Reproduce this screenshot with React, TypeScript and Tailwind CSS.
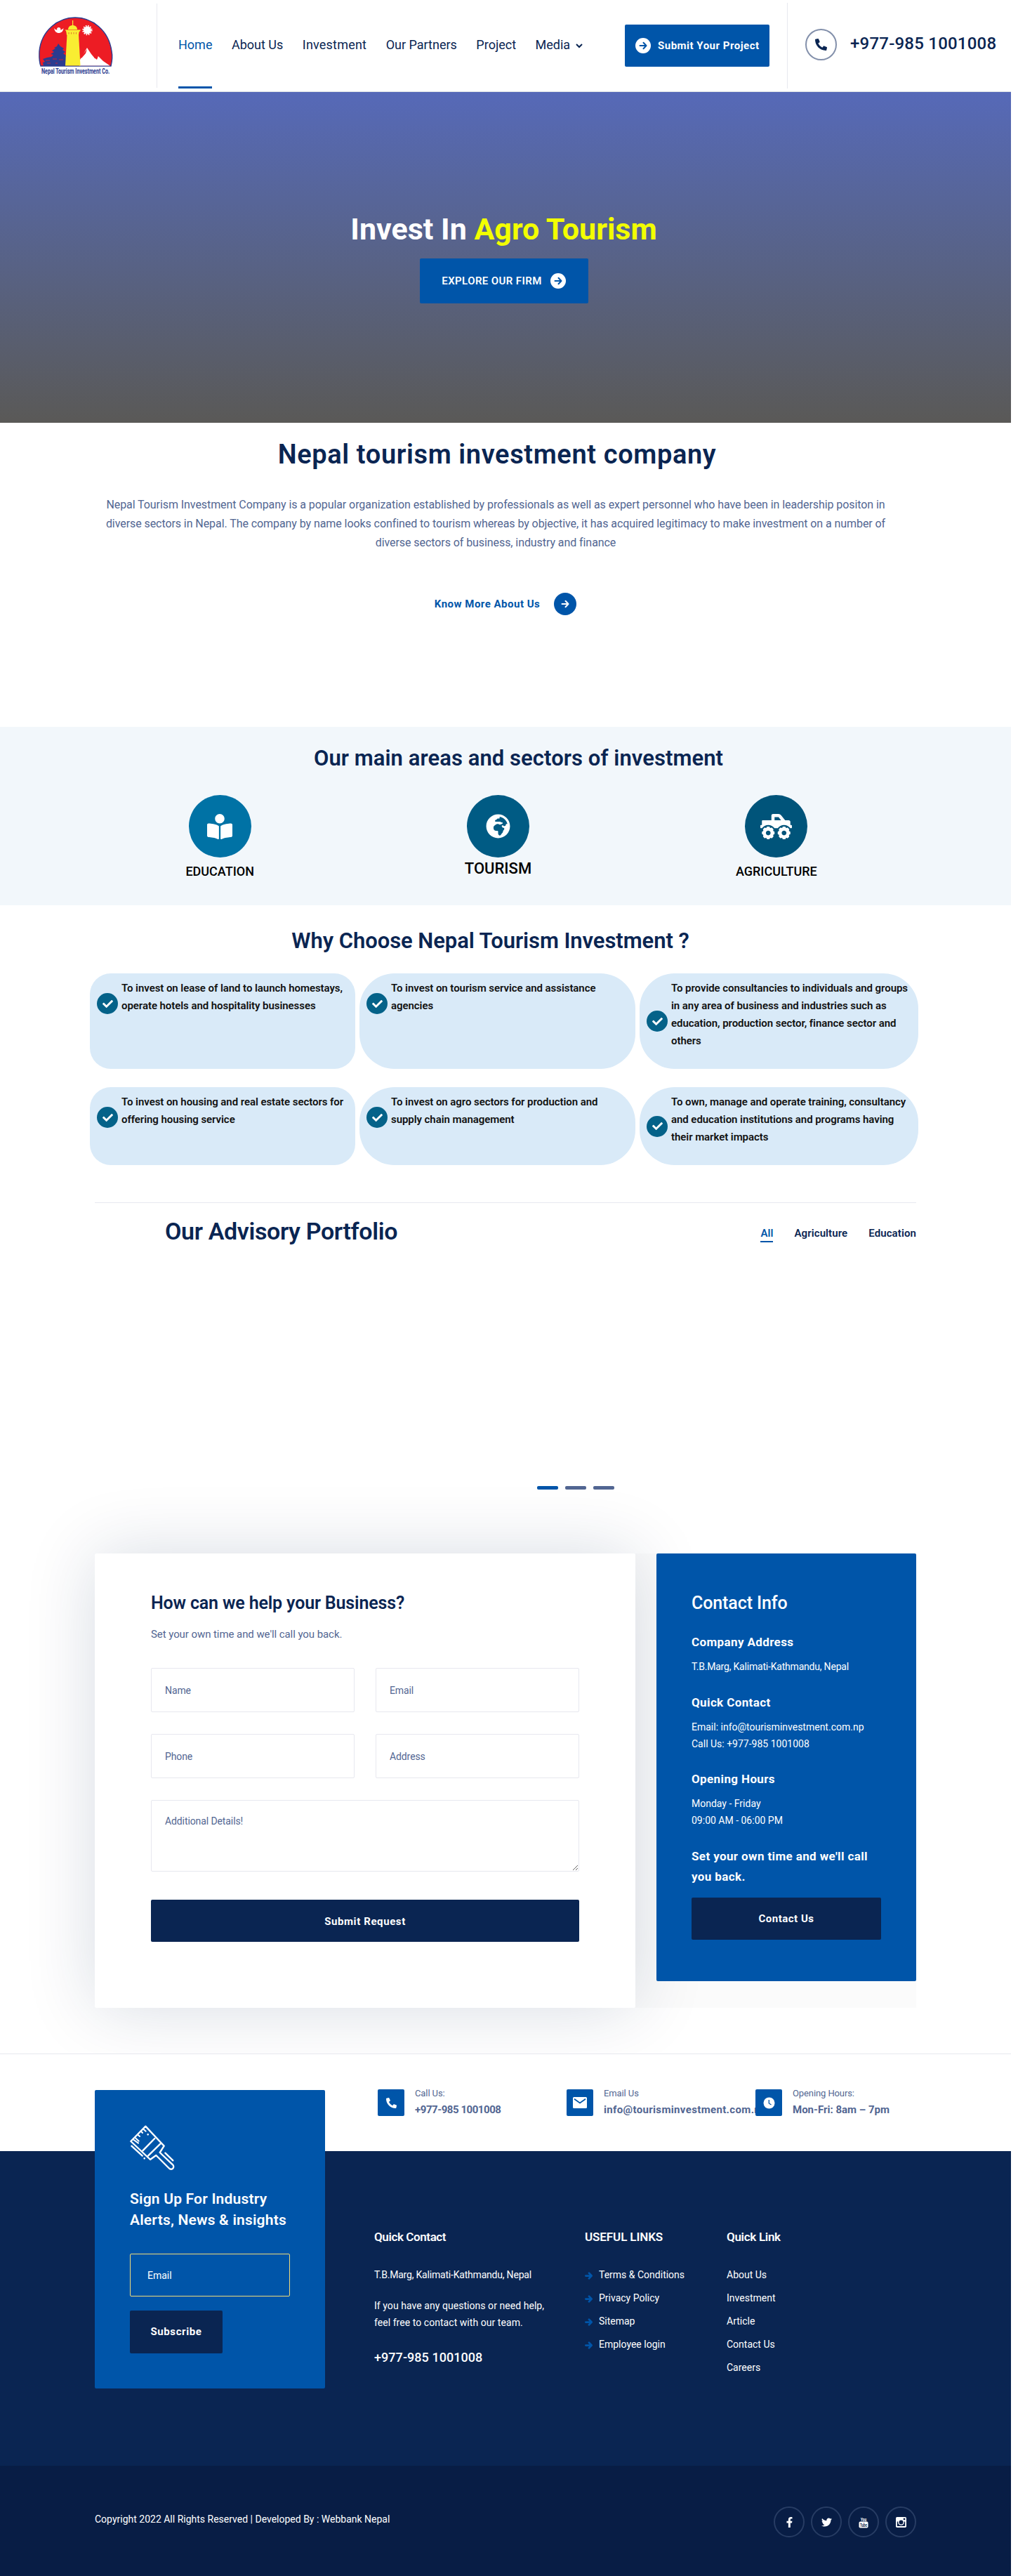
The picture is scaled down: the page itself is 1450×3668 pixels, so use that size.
import React from 'react'
import { FaBookReader, FaCheck, FaFacebookF, FaGlobeAfrica, FaPhoneAlt, FaTruckMonster, FaTwitter } from 'react-icons/fa'

function Logo() {
  return (
    <svg width="110" height="90" viewBox="0 0 110 90">
      <path d="M5 71C2 63 3 55 3 50C6 20 30 2 54 2S102 20 106 50C107 55 107 63 105 71Z" fill="#ed1c24" stroke="#2b3b8f" strokeWidth="1.4" />
      <path d="M60 70.5L61 62L71 45L77 54L82 60L87 57L94 64L103.5 70.5Z" fill="#fff" />
      <path d="M62 58L71 47L69 53L63 60Z" fill="#ed1c24" />
      <path d="M81 59L87 57L85 62Z" fill="#ed1c24" />
      <path
        d="M30 39L33 43L38 46L36 48L40 51L37 53L41 56V71H9L8 66L11 65L8 61L14 59L20 58L23 55L19 54L24 51L21 49L26 46L24 45L28 43Z"
        fill="#2b3b8f"
      />
      <path d="M12 63h6M22 61h6M31 62h6M14 67h5M26 67h3" stroke="#ed1c24" strokeWidth="0.8" />
      <path d="M42.5 26H59L61.5 70.5H40Z" fill="#f9ed32" />
      <path d="M41 20H60L59 27H42Z" fill="#f9ed32" />
      <path d="M39.5 19.5H62L60 22.5H42Z" fill="#f9ed32" />
      <path d="M44 19C44 11 57 11 57 19Z" fill="#f9ed32" />
      <path d="M50.6 6V14" stroke="#f9ed32" strokeWidth="1.2" />
      <path d="M45 23v2.500M48.500 23v2.500M52 23v2.500M55.500 23v2.500" stroke="#d9542b" strokeWidth="0.8" />
      <path d="M24 17C26 21 35 21 37.500 17C37 22 34 24 30.700 24S25 22 24 17Z" fill="#fff" />
      <circle cx="30.700" cy="18.500" r="2.600" fill="#fff" />
      <circle cx="71.400" cy="20" r="5.600" fill="#fff" />
      <circle cx="71.400" cy="20" r="6.300" fill="none" stroke="#fff" strokeWidth="1.800" strokeDasharray="1.600 1.700" />
      <text x="6" y="82" fontFamily="Roboto, sans-serif" fontSize="10.500" fontWeight="700" fill="#2b3b8f" textLength="97" lengthAdjust="spacingAndGlyphs">
        Nepal Tourism Investment Co.
      </text>
    </svg>
  )
}

function Arrow({ size, weight = 2 }: { size: number; weight?: number }) {
  return (
    <svg width={size} height={size} viewBox="0 0 12 12" fill="none" stroke="currentColor" strokeWidth={weight} strokeLinecap="round" strokeLinejoin="round">
      <path d="M1.500 6H10M6.500 1.800L10.500 6L6.500 10.200" />
    </svg>
  )
}

function Brush() {
  return (
    <svg width="90" height="90" viewBox="0 0 270 270" fill="none" stroke="#fff" strokeWidth="7" strokeLinecap="round" strokeLinejoin="round">
      <path d="M97 38L34 102L117 180L142 162L196 216C208 229 224 214 213 202L158 150L176 122Z" />
      <path d="M136 90L85 142M160 113L108 164" />
      <path d="M52 86L68 101M44 94L66 110M64 74L72 81M78 60L84 66M88 50L98 59" strokeWidth="6" />
      <path d="M37 122L83 164M181 152L214 184" />
      <path d="M107 73h.1M92 175h.1" strokeWidth="8" />
    </svg>
  )
}

function Mail() {
  return (
    <svg width="20" height="16" viewBox="0 0 20 16">
      <rect width="20" height="16" rx="1.500" fill="#fff" />
      <path d="M2 2.800L10 8.500L18 2.800" fill="none" stroke="#0055a9" strokeWidth="1.800" />
    </svg>
  )
}

function Clock() {
  return (
    <svg width="17" height="17" viewBox="0 0 17 17">
      <circle cx="8.500" cy="8.500" r="8" fill="#fff" />
      <path d="M8.300 4V9L11.500 11" fill="none" stroke="#0055a9" strokeWidth="1.300" />
    </svg>
  )
}

function YouTube() {
  return (
    <svg width="14" height="17" viewBox="0 0 14 17" fontFamily="Roboto, sans-serif" fontWeight="700">
      <text x="3" y="6.500" fontSize="7.500" fill="#fff" textLength="8" lengthAdjust="spacingAndGlyphs">You</text>
      <rect x="0.500" y="7.600" width="13" height="9" rx="1.800" fill="#fff" />
      <text x="2" y="14.800" fontSize="7" fill="#081d45" textLength="10" lengthAdjust="spacingAndGlyphs">Tube</text>
    </svg>
  )
}

function Instagram() {
  return (
    <svg width="15" height="15" viewBox="0 0 15 15">
      <rect width="15" height="15" rx="1.800" fill="#fff" />
      <rect x="10.800" y="1.700" width="2.500" height="2.500" fill="#081d45" />
      <path d="M1.800 6.500V13H13.200V6.500H11.800A4.400 4.400 0 1 1 3.200 6.500Z" fill="#081d45" />
      <circle cx="7.500" cy="7.500" r="3" fill="#081d45" />
    </svg>
  )
}

const nav = [
  { label: 'About Us', cls: '' },
  { label: 'Investment', cls: 'tracking-[0.2px]' },
  { label: 'Our Partners', cls: '' },
  { label: 'Project', cls: '' },
]

function Header() {
  return (
    <header className="flex h-[131px] border-b border-[#dfe4e6] text-[#0a2552]">
      <div className="mt-[5px] h-[120px] w-[224px] border-r border-[#e7e8ef] pt-[18px] pl-[53px]">
        <Logo />
      </div>
      <nav className="ml-[30px] flex w-[636px] gap-[27.5px] pt-[49px] text-[18px] leading-[30px] whitespace-nowrap">
        <a className="h-[77px] border-b-[3px] border-[#0055a9] text-[#0055a9]">Home</a>
        {nav.map((n) => (
          <a key={n.label} className={n.cls}>
            {n.label}
          </a>
        ))}
        <a className="flex gap-[8px]">
          Media
          <svg className="mt-[13px]" width="10" height="7" viewBox="0 0 10 7" fill="none" stroke="currentColor" strokeWidth="2">
            <path d="M1 1L5 5L9 1" />
          </svg>
        </a>
      </nav>
      <a className="mt-[35px] flex h-[60px] w-[206px] items-center rounded-[2px] bg-[#0055a9] pl-[15px] text-[15px] font-bold tracking-[0.5px] whitespace-nowrap text-white">
        <span className="mr-[10px] flex size-[22px] items-center justify-center rounded-full bg-white text-[#0055a9]">
          <Arrow size={12} />
        </span>
        Submit Your Project
      </a>
      <div className="mt-[4px] ml-[25px] flex h-[122px] border-l border-[#e7e8ef] pt-[37px] pl-[25px]">
        <span className="flex size-[45px] items-center justify-center rounded-full border-2 border-[#8390ab]">
          <FaPhoneAlt size={17} />
        </span>
        <span className="ml-[19px] text-[24px] leading-[42px] font-medium tracking-[0.22px] whitespace-nowrap">+977-985 1001008</span>
      </div>
    </header>
  )
}

function Hero() {
  return (
    <section className="flex h-[471px] flex-col items-center bg-linear-to-b from-[#5669b8] to-[#5a5957] pt-[170px] pr-[5px] text-white">
      <h1 className="text-[43px] leading-[50px] font-bold">
        Invest In <span className="text-[#f2ff00]">Agro Tourism</span>
      </h1>
      <a className="mt-[17px] flex h-[64px] w-[240px] items-center justify-center gap-[12px] rounded-[2px] bg-[#0055a9] text-[15px] font-semibold tracking-[0.4px]">
        EXPLORE OUR FIRM
        <span className="flex size-[22px] items-center justify-center rounded-full bg-white text-[#0055a9]">
          <Arrow size={12} />
        </span>
      </a>
    </section>
  )
}

function About() {
  return (
    <section className="flex h-[433px] flex-col items-center pt-[22px]">
      <h2 className="pr-[24px] text-[38px] leading-[46px] font-semibold tracking-[0.62px] text-[#0a2552]">Nepal tourism investment company</h2>
      <p className="mt-[35px] pr-[28px] text-center text-[16px] leading-[27px] tracking-[-0.074px] text-[#526692]">
        Nepal Tourism Investment Company is a popular organization established by professionals as well as expert personnel who have been in leadership positon in
        <br />
        diverse sectors in Nepal. The company by name looks confined to tourism whereas by objective, it has acquired legitimacy to make investment on a number of
        <br />
        diverse sectors of business, industry and finance
      </p>
      <a className="mt-[58px] flex items-center gap-[20px] text-[15px] font-bold tracking-[0.5px] text-[#0055a9]">
        Know More About Us
        <span className="flex size-[32px] items-center justify-center rounded-full bg-[#0055a9] text-white">
          <Arrow size={12} />
        </span>
      </a>
    </section>
  )
}

function Sectors() {
  return (
    <section className="h-[254px] bg-[#f2f7fb] pt-[25px]">
      <h2 className="pl-[37px] text-center text-[31px] leading-[40px] font-semibold tracking-[0.07px] text-[#0a2552]">Our main areas and sectors of investment</h2>
      <div className="mt-[32px] ml-[115px] grid w-[1189px] grid-cols-3 justify-items-center text-[18px] leading-[30px] font-medium text-black">
        <div className="flex flex-col items-center">
          <span className="flex size-[89px] items-center justify-center rounded-full bg-[#0072a5] text-white">
            <FaBookReader size={36} />
          </span>
          <span className="mt-[5px]">EDUCATION</span>
        </div>
        <div className="flex flex-col items-center">
          <span className="flex size-[89px] items-center justify-center rounded-full bg-[#005b84] text-white">
            <FaGlobeAfrica size={35} />
          </span>
          <span className="mt-[1px] text-[22px]">TOURISM</span>
        </div>
        <div className="flex flex-col items-center">
          <span className="flex size-[89px] items-center justify-center rounded-full bg-[#00547a] text-white">
            <FaTruckMonster size={36} className="w-[45px]" />
          </span>
          <span className="mt-[5px]">AGRICULTURE</span>
        </div>
      </div>
    </section>
  )
}

const reasons: { lines: string[]; radius: string }[] = [
  { lines: ['To invest on lease of land to launch homestays,', 'operate hotels and hospitality businesses'], radius: 'rounded-[30px]' },
  { lines: ['To invest on tourism service and assistance', 'agencies'], radius: 'rounded-[50px]' },
  {
    lines: ['To provide consultancies to individuals and groups', 'in any area of business and industries such as', 'education, production sector, finance sector and', 'others'],
    radius: 'rounded-[50px]',
  },
  { lines: ['To invest on housing and real estate sectors for', 'offering housing service'], radius: 'rounded-[30px]' },
  { lines: ['To invest on agro sectors for production and', 'supply chain management'], radius: 'rounded-[50px]' },
  { lines: ['To own, manage and operate training, consultancy', 'and education institutions and programs having', 'their market impacts'], radius: 'rounded-[50px]' },
]

function Why() {
  return (
    <section className="pt-[31px]">
      <h2 className="pr-[43px] text-center text-[31px] leading-[40px] font-semibold tracking-[-0.06px] text-[#0a2552]">Why Choose Nepal Tourism Investment ?</h2>
      <div className="mt-[26px] ml-[128px] grid grid-cols-[378px_393px_397px] grid-rows-[136px_111px] gap-x-[6px] gap-y-[26px]">
        {reasons.map((r) => (
          <div key={r.lines[0]} className={`bg-[#d9eaf8] pt-[9px] pl-[10px] ${r.radius}`}>
            <div className="flex items-center">
              <span className="mt-[18px] flex size-[30px] items-center justify-center rounded-full bg-[#046289] text-white">
                <FaCheck size={15} />
              </span>
              <p className="ml-[5px] text-[15px] leading-[25px] font-semibold tracking-[-0.06px] whitespace-nowrap text-[#111]">
                {r.lines.map((l) => (
                  <span key={l} className="block">
                    {l}
                  </span>
                ))}
              </p>
            </div>
          </div>
        ))}
      </div>
    </section>
  )
}

function Portfolio() {
  return (
    <section className="mx-auto mt-[53px] h-[409px] w-[1170px] border-t border-[#e7e8ef] pt-[18px] text-[#0a2552]">
      <div className="flex justify-between pl-[100px]">
        <h2 className="text-[34px] leading-[44px] font-semibold tracking-[-0.36px]">Our Advisory Portfolio</h2>
        <div className="mt-[13px] flex gap-[30px] text-[15px] leading-[24px] font-semibold tracking-[0.1px]">
          <a className="h-[25px] border-b-2 border-[#0055a9] text-[#0055a9]">All</a>
          <a>Agriculture</a>
          <a>Education</a>
        </div>
      </div>
      <div className="mt-[341px] ml-[630px] flex gap-[10px]">
        <span className="h-[5px] w-[30px] rounded-[2px] bg-[#0055a9]" />
        <span className="h-[5px] w-[30px] rounded-[2px] bg-[#526692]" />
        <span className="h-[5px] w-[30px] rounded-[2px] bg-[#526692]" />
      </div>
    </section>
  )
}

function InfoTitle({ children }: { children: React.ReactNode }) {
  return <h4 className="text-[17px] leading-[29px] font-bold tracking-[0.38px]">{children}</h4>
}

const field = 'rounded-[2px] border border-[#e7e8ef] bg-white px-[19px] text-[14px] leading-[24px] text-[#526692] placeholder:text-[#526692] placeholder:opacity-100 tracking-[-0.1px]'

function Contact() {
  return (
    <section className="mx-auto mt-[91px] flex h-[647px] w-[1170px] bg-[#fbfbfb]">
      <form className="h-[647px] w-[770px] rounded-[2px] bg-white px-[80px] pt-[54px] shadow-[0_0_100px_rgba(10,37,82,0.16)]">
        <h3 className="text-[25px] leading-[34px] font-semibold tracking-[-0.15px] text-[#0a2552]">How can we help your Business?</h3>
        <p className="mt-[15px] text-[15px] leading-[24px] tracking-[-0.07px] text-[#526692]">Set your own time and we&apos;ll call you back.</p>
        <div className="mt-[36px] grid grid-cols-2 gap-x-[30px] gap-y-[31px]">
          <input className={`h-[63px] ${field}`} placeholder="Name" />
          <input className={`h-[63px] ${field}`} placeholder="Email" />
          <input className={`h-[63px] ${field}`} placeholder="Phone" />
          <input className={`h-[63px] ${field}`} placeholder="Address" />
          <textarea className={`col-span-2 h-[102px] pt-[17px] ${field}`} placeholder="Additional Details!" />
        </div>
        <button type="button" className="mt-[40px] h-[60px] w-full rounded-[2px] bg-[#0a2552] pt-[2px] text-[15px] font-bold tracking-[0.6px] text-white">
          Submit Request
        </button>
      </form>
      <aside className="ml-[30px] h-[609px] w-[370px] rounded-[2px] bg-[#0055a9] px-[50px] pt-[54px] text-[14px] leading-[24px] whitespace-nowrap text-white">
        <h3 className="mb-[24px] text-[25px] leading-[34px] font-medium tracking-[-0.1px]">Contact Info</h3>
        <InfoTitle>Company Address</InfoTitle>
        <p className="mt-[8px] mb-[25px] tracking-[-0.2px]">T.B.Marg, Kalimati-Kathmandu, Nepal</p>
        <InfoTitle>Quick Contact</InfoTitle>
        <p className="mt-[8px] mb-[24px]">
          Email: info@tourisminvestment.com.np
          <br />
          Call Us: +977-985 1001008
        </p>
        <InfoTitle>Opening Hours</InfoTitle>
        <p className="mt-[8px] mb-[25px]">
          Monday - Friday
          <br />
          09:00 AM - 06:00 PM
        </p>
        <InfoTitle>
          Set your own time and we&apos;ll call
          <br />
          you back.
        </InfoTitle>
        <button type="button" className="mt-[15px] h-[60px] w-full rounded-[2px] bg-[#0a2552] text-[15px] font-bold tracking-[0.5px]">
          Contact Us
        </button>
      </aside>
    </section>
  )
}

function ContactItem({ icon, label, value, tracking }: { icon: React.ReactNode; label: string; value: string; tracking: string }) {
  return (
    <div className="flex w-[269px]">
      <span className="relative z-10 flex size-[38px] shrink-0 items-center justify-center rounded-[2px] bg-[#0055a9] text-white">{icon}</span>
      <div className="-mt-[5px] ml-[15px] whitespace-nowrap text-[#526692]">
        <p className="text-[13px] leading-[22px] tracking-[-0.1px]">{label}</p>
        <p className={`text-[15px] leading-[24px] font-bold ${tracking}`}>{value}</p>
      </div>
    </div>
  )
}

function Footer() {
  return (
    <footer className="relative mt-[65px] border-t border-[#e7e8ef] bg-white">
      <div className="flex h-[138px] pt-[50px] pl-[538px]">
        <ContactItem icon={<FaPhoneAlt size={15} />} label="Call Us:" value="+977-985 1001008" tracking="tracking-[-0.45px]" />
        <ContactItem icon={<Mail />} label="Email Us" value="info@tourisminvestment.com.np" tracking="tracking-[0.35px]" />
        <ContactItem icon={<Clock />} label="Opening Hours:" value="Mon-Fri: 8am – 7pm" tracking="tracking-[0px]" />
      </div>
      <div className="flex h-[448px] bg-[#0a2552] pt-[110px] pl-[533px] text-[14px] leading-[24px] whitespace-nowrap text-white">
        <div className="w-[300px]">
          <h4 className="text-[17px] font-semibold tracking-[-0.4px]">Quick Contact</h4>
          <p className="mt-[30px] tracking-[-0.2px]">T.B.Marg, Kalimati-Kathmandu, Nepal</p>
          <p className="mt-[20px] tracking-[0.05px]">
            If you have any questions or need help,
            <br />
            feel free to contact with our team.
          </p>
          <p className="mt-[24px] text-[18px] leading-[28px] font-medium tracking-[0.05px]">+977-985 1001008</p>
        </div>
        <div className="w-[202px]">
          <h4 className="text-[17px] font-semibold tracking-[-0.1px]">USEFUL LINKS</h4>
          <ul className="mt-[30px] flex flex-col gap-[9px]">
            {['Terms & Conditions', 'Privacy Policy', 'Sitemap', 'Employee login'].map((l) => (
              <li key={l} className="flex items-center gap-[9px]">
                <span className="mt-[2px] text-[#0055a9]">
                  <Arrow size={11} weight={3} />
                </span>
                {l}
              </li>
            ))}
          </ul>
        </div>
        <div>
          <h4 className="text-[17px] font-semibold tracking-[-0.3px]">Quick Link</h4>
          <ul className="mt-[30px] flex flex-col gap-[9px]">
            {['About Us', 'Investment', 'Article', 'Contact Us', 'Careers'].map((l) => (
              <li key={l}>{l}</li>
            ))}
          </ul>
        </div>
      </div>
      <div className="flex h-[157px] justify-between bg-[#081d45] px-[135px] pt-[58px] text-white">
        <p className="mt-[6px] text-[14px] leading-[24px]">Copyright 2022 All Rights Reserved | Developed By : Webbank Nepal</p>
        <div className="flex gap-[9px]">
          {[<FaFacebookF size={15} />, <FaTwitter size={15} />, <YouTube />, <Instagram />].map((icon, i) => (
            <span key={i} className="flex size-[44px] items-center justify-center rounded-full border-2 border-[#273c63]">
              {icon}
            </span>
          ))}
        </div>
      </div>
      <div className="absolute top-[51px] left-[135px] h-[425px] w-[328px] rounded-[2px] bg-[#0055a9] px-[50px] pt-[39px] text-white">
        <div className="-ml-[10px]">
          <Brush />
        </div>
        <h3 className="mt-[11px] text-[21px] leading-[30px] font-semibold tracking-[0.2px] whitespace-nowrap">
          Sign Up For Industry
          <br />
          Alerts, News &amp; insights
        </h3>
        <input className="mt-[33px] h-[61px] w-full rounded-[2px] border border-[#f1dc7a] bg-transparent px-[24px] text-[14px] placeholder:text-white placeholder:opacity-100" placeholder="Email" />
        <button type="button" className="mt-[20px] h-[61px] w-[132px] rounded-[2px] bg-[#0a2552] text-[15px] font-bold tracking-[0.6px]">
          Subscribe
        </button>
      </div>
    </footer>
  )
}

export default function App() {
  return (
    <div className="min-h-[3668px] bg-white">
      <div className="w-[1440px] overflow-hidden bg-white font-[Roboto,sans-serif] [&_svg]:block [&_svg]:overflow-visible">
        <Header />
        <Hero />
        <About />
        <Sectors />
        <Why />
        <Portfolio />
        <Contact />
        <Footer />
      </div>
    </div>
  )
}
